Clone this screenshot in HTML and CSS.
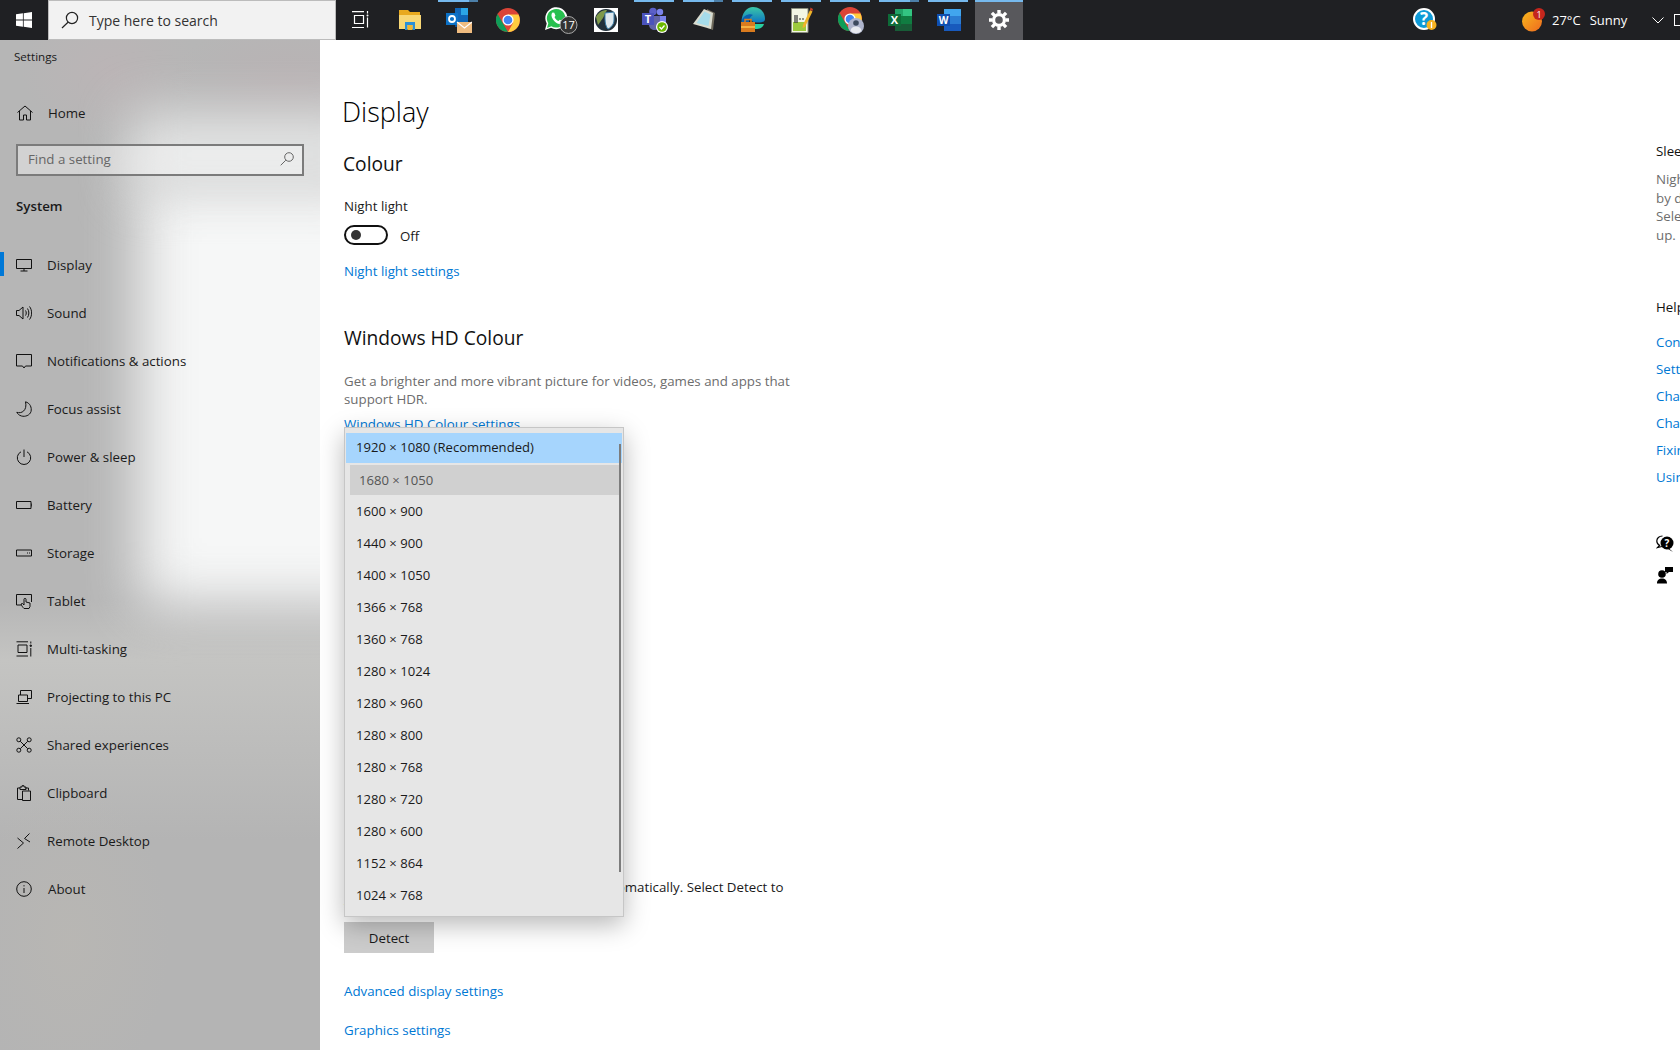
FILE: index.html
```html
<!DOCTYPE html>
<html lang="en">
<head>
    <meta charset="UTF-8">
    <meta name="viewport" content="width=device-width, initial-scale=1.0">
    <title>Settings - Display</title>
    <link rel="stylesheet" href="styles.css">
</head>
<body>
    <!-- taskbar -->
    <div class="taskbar">
        <div class="start">
            <svg width="16" height="16" viewBox="0 0 16 16"><path fill="#fff" d="M0 2.3 6.9 1.3V7.6H0ZM7.7 1.2 16 0V7.6H7.7ZM0 8.4H6.9V14.7L0 13.7ZM7.7 8.4H16V16L7.7 14.8Z"/></svg>
        </div>
        <div class="search-box">
            <svg width="18" height="18" viewBox="0 0 18 18" fill="none" stroke="#222" stroke-width="1.2"><circle cx="11" cy="7" r="5.6"/><path d="M7 11.2 1 17"/></svg>
            <span>Type here to search</span>
        </div>
        <div class="tile">
            <svg width="18" height="18" viewBox="0 0 18 18" fill="none" stroke="#fff" stroke-width="1.2"><path d="M0 .6H12M2.500 4.500H11.500V12.500H2.500ZM0 16.500H12M15.500 0V2.500M15.500 6.500V16.500"/><circle cx="15.500" cy="4.500" r="1" fill="#fff" stroke="none"/></svg>
        </div>
        <div class="tile">
            <svg width="24" height="22" viewBox="0 0 24 22"><path fill="#e8a91f" d="M1 1H10L12 3H22V7H1Z"/><path fill="#f8d775" d="M1 6H23V20H1Z"/><path fill="#2b8fd8" d="M7 13H17V21H14.500V16H9.500V21H7Z"/><path fill="#f2b632" d="M9.500 16H14.500V21H9.500Z"/></svg>
        </div>
        <div class="tile open stacked">
            <svg width="26" height="26" viewBox="0 0 26 26"><path fill="#1066b8" d="M9 1H22V15H9Z"/><path fill="#2ba5e6" d="M15 1H22V8H15Z"/><path fill="#0f4f96" d="M9 15H22V20H9Z"/><path fill="#0c71c6" d="M0 6H12V18H0Z"/><circle cx="6" cy="12" r="3" fill="none" stroke="#fff" stroke-width="1.800"/><path fill="#f0bc80" d="M11 15H26V26H11Z"/><path fill="none" stroke="#fff" stroke-width="1.200" d="M11 15 18.500 21 26 15"/></svg>
        </div>
        <div class="tile">
            <svg width="24" height="24" viewBox="0 0 24 24"><circle cx="12" cy="12" r="12" fill="#db4437"/><path fill="#0f9d58" d="M12 24A12 12 0 0 1 1.600 6L7 15.500 12 24Z"/><path fill="#ffcd40" d="M12 6.500H22.500A12 12 0 0 1 12 24L17 15Z"/><circle cx="12" cy="12" r="5.600" fill="#fff"/><circle cx="12" cy="12" r="4.300" fill="#4285f4"/></svg>
        </div>
        <div class="tile whatsapp">
            <svg width="34" height="28" viewBox="0 0 34 28"><path fill="#fff" d="M1 24 2.700 17.500A11 11 0 1 1 7 21.800Z"/><path fill="#28c04f" d="M3 22 4.300 17.300A9.300 9.300 0 1 1 7.400 20.300Z"/><path fill="#fff" d="M8.500 6.500C7 8 7 10.500 9 13.500S14 18.500 16.500 18C18 17.700 19 16 18.500 15.200L15.800 13.800 14.500 15C13 14.500 11 12.500 10.500 11L11.500 9.700 10.300 6.800Z"/><circle cx="24.500" cy="19" r="8.500" fill="#333" stroke="#aaa" stroke-width="1"/><text x="24.500" y="23" class="icon-text" font-size="11" fill="#fff" text-anchor="middle">17</text></svg>
        </div>
        <div class="tile">
            <svg width="24" height="24" viewBox="0 0 24 24"><path fill="#fff" d="M0 0H24V24H0Z"/><circle cx="12" cy="12" r="11" fill="#22303a"/><path fill="#7f9a4a" d="M2 9C5 3 10 2 13 2L9 10 4 17Z"/><path fill="#dfe9ee" stroke="#3a7ea8" stroke-width="1" d="M11 5 20 4V12C20 17 16 20 14 21 12 19 11 15 11 11Z"/></svg>
        </div>
        <div class="tile open">
            <svg width="26" height="26" viewBox="0 0 26 26"><circle cx="18" cy="5" r="3.200" fill="#7b83eb"/><circle cx="11" cy="4.500" r="3.800" fill="#5b5fc7"/><path fill="#7b83eb" d="M15 9H24V17C24 20 21 21 19 21H15Z"/><path fill="#6264a7" d="M7 9H18V19C18 22 15 23 12.500 23S7 21 7 18Z"/><path fill="#4b53bc" d="M0 6H12V18H0Z"/><text x="6" y="16" class="icon-text" font-size="11" font-weight="700" fill="#fff" text-anchor="middle">T</text><circle cx="20" cy="20" r="6" fill="#fff"/><circle cx="20" cy="20" r="4.800" fill="#6bb700"/><path fill="none" stroke="#fff" stroke-width="1.300" d="M17.500 20 19.500 22 22.500 18.500"/></svg>
        </div>
        <div class="tile open stacked">
            <svg width="24" height="24" viewBox="0 0 24 24"><path fill="#6f6a5c" d="M15 1 23 5 21 22 15 20Z"/><path fill="#d9dcd0" d="M12 1 21 5 19 21 1 16Z"/><path fill="#a6dcea" d="M12.500 3.500 18.500 6.500 16.500 18 4.500 15Z"/></svg>
        </div>
        <div class="tile open">
            <svg width="24" height="26" viewBox="0 0 24 26"><defs><linearGradient id="edgeBlue" x1="0" y1="0" x2="0" y2="1"><stop offset="0" stop-color="#3bc7a8"/><stop offset="1" stop-color="#0a70c4"/></linearGradient></defs><path fill="url(#edgeBlue)" d="M12 0C20 0 24 6 24 12 24 15 21 15.500 17 15.500 12 15.500 10 14 10 12 6 12 1 14 .5 17 0 6 6 0 12 0Z"/><path fill="#0a5fae" d="M1 13C3 8 9 6 12 8 10 9 8 11 8 15H1Z"/><path fill="#2ad0a0" d="M16 22C20 22 22.500 19 23 17H14V22Z"/><path fill="#d97b1e" d="M0 15H14V25H0Z"/><path fill="#f5b042" d="M0 19H14V21H0Z"/><path fill="none" stroke="#d97b1e" stroke-width="1.500" d="M4 15V12.500H10V15"/></svg>
        </div>
        <div class="tile open">
            <svg width="22" height="26" viewBox="0 0 22 26"><path fill="#f3f6e4" stroke="#8b8f7e" d="M.5 1.500H17V25.500H.5Z"/><path fill="#9dcb3c" d="M2 8H15V24H2Z"/><path fill="#f3f6e4" d="M2 8H15V15H2Z"/><path stroke="#333" stroke-width="1.200" d="M4 8V16M6 8V16M8 12H10M11 12H13"/><path fill="#f0b429" d="M19 3 21.500 4.500 14 20 11.500 21 12 18Z"/><path fill="#c9412c" d="M19.500 .5 22 2 21.400 4 19 3Z"/></svg>
        </div>
        <div class="tile open">
            <svg width="26" height="27" viewBox="0 0 26 27"><circle cx="12" cy="12" r="12" fill="#db4437"/><path fill="#0f9d58" d="M12 24A12 12 0 0 1 1.600 6L7 15.500 12 24Z"/><path fill="#ffcd40" d="M12 6.500H22.500A12 12 0 0 1 12 24L17 15Z"/><circle cx="12" cy="12" r="5.600" fill="#fff"/><circle cx="12" cy="12" r="4.300" fill="#4285f4"/><circle cx="18" cy="19" r="8" fill="#aeb4cc"/><circle cx="18" cy="16" r="2.800" fill="#3d4a5e"/><path fill="#e8eaf0" d="M12.500 24C13 20.500 15.500 19.500 18 19.500S23 20.500 23.500 24A8 8 0 0 1 12.500 24Z"/></svg>
        </div>
        <div class="tile open stacked">
            <svg width="24" height="24" viewBox="0 0 24 24"><path fill="#21a366" d="M7 1H24V8H7Z"/><path fill="#33c481" d="M15 1H24V8H15Z"/><path fill="#107c41" d="M7 8H24V16H7Z"/><path fill="#185c37" d="M7 16H24V23H7Z"/><path fill="#0e6b38" d="M0 6H13V18H0Z"/><text x="6.500" y="16" class="icon-text" font-size="11" font-weight="700" fill="#fff" text-anchor="middle">X</text></svg>
        </div>
        <div class="tile open">
            <svg width="24" height="24" viewBox="0 0 24 24"><path fill="#41a5ee" d="M7 1H24V8H7Z"/><path fill="#2b7cd3" d="M7 8H24V16H7Z"/><path fill="#185abd" d="M7 16H24V23H7Z"/><path fill="#0f4fb0" d="M0 6H13V18H0Z"/><text x="6.500" y="16" class="icon-text" font-size="10" font-weight="700" fill="#fff" text-anchor="middle">W</text></svg>
        </div>
        <div class="tile open active">
            <svg width="20" height="20" viewBox="0 0 20 20" fill="none" stroke="#fff"><circle cx="10" cy="10" r="5.400" stroke-width="3.200"/><path stroke-width="3.400" d="M10 0V3.500M10 16.500V20M0 10H3.500M16.500 10H20M2.900 2.900 5.400 5.400M14.600 14.600 17.100 17.100M17.100 2.900 14.600 5.400M5.400 14.600 2.900 17.100"/></svg>
        </div>

        <div class="tray">
            <svg class="help-icon" width="24" height="24" viewBox="0 0 24 24"><circle cx="11" cy="11" r="10" fill="#0e9ad7" stroke="#fff" stroke-width="2"/><text x="11" y="17" class="icon-text" font-size="17" font-weight="700" fill="#fff" text-anchor="middle">?</text><circle cx="18.500" cy="17" r="5" fill="#f5b120"/><path stroke="#fff" stroke-width="1.300" d="M18.500 14V20"/></svg>
            <svg class="weather-icon" width="24" height="24" viewBox="0 0 24 24"><defs><linearGradient id="sun" x1="0" y1="0" x2="1" y2="1"><stop offset="0" stop-color="#f9b81c"/><stop offset="1" stop-color="#ee6a1f"/></linearGradient></defs><circle cx="10" cy="13.500" r="10" fill="url(#sun)"/><circle cx="17" cy="6" r="6" fill="#c4261d"/><text x="17" y="9.500" class="icon-text" font-size="9" fill="#fff" text-anchor="middle">1</text></svg>
            <span class="temp">27°C</span>
            <span class="sky">Sunny</span>
            <svg class="chevron" width="12" height="7" viewBox="0 0 12 7" fill="none" stroke="#fff" stroke-width="1"><path d="M.5 .5 6 6 11.500 .5"/></svg>
            <span class="tray-box"></span>
        </div>
    </div>

    <div class="window">
        <!-- left nav -->
        <div class="sidebar">
            <div class="app-title">Settings</div>
            <div class="home-row">
                <svg width="16" height="16" viewBox="0 0 16 16" fill="none" stroke="#111" stroke-width="1"><path d="M.5 7.500 8 1 15.500 7.500M2.500 6V15H6.500V10H9.500V15H13.500V6"/></svg>
                <span>Home</span>
            </div>
            <div class="find-box">
                <span>Find a setting</span>
                <svg width="14" height="14" viewBox="0 0 14 14" fill="none" stroke="#666" stroke-width="1"><circle cx="9" cy="5" r="4.300"/><path d="M5.800 8.200 .7 13.300"/></svg>
            </div>
            <div class="group-title">System</div>
            <ul class="nav">
                <li class="selected">
                    <svg viewBox="0 0 16 16"><path d="M.5 2.500H15.500V11.500H.5ZM8 11.500V14M4.500 14H11.500"/></svg>
                    <span>Display</span>
                </li>
                <li>
                    <svg viewBox="0 0 16 16"><path d="M.5 5.500H3L7 2V14L3 10.500H.5ZM9.500 5.500C10.500 7 10.500 9 9.500 10.500M11.500 3.500C13.300 6 13.300 10 11.500 12.500M13.500 1.500C16.300 5 16.300 11 13.500 14.500"/></svg>
                    <span>Sound</span>
                </li>
                <li>
                    <svg viewBox="0 0 16 16"><path d="M.5 1.500H15.500V13H9.500L8 15 6.500 13H.5Z"/></svg>
                    <span>Notifications &amp; actions</span>
                </li>
                <li>
                    <svg viewBox="0 0 16 16"><path d="M9.500 .8C14 2 16 6.500 15 10.500 13.800 14.500 9 16 5.500 15 3 14.300 1.500 12.800 .8 11.300 5.500 13 11.500 9.500 9.500 .8Z"/></svg>
                    <span>Focus assist</span>
                </li>
                <li>
                    <svg viewBox="0 0 16 16"><path d="M8 .5V8M5 2.800A6.700 6.700 0 1 0 11 2.800"/></svg>
                    <span>Power &amp; sleep</span>
                </li>
                <li>
                    <svg viewBox="0 0 16 16"><path d="M.5 4.500H15V11.500H.5ZM15.800 6.500V9.500"/></svg>
                    <span>Battery</span>
                </li>
                <li>
                    <svg viewBox="0 0 16 16"><path d="M.5 5H15.500V11H.5ZM11 8H12M13 8H14"/></svg>
                    <span>Storage</span>
                </li>
                <li>
                    <svg viewBox="0 0 16 16"><path d="M5 12H.5V1.500H15.500V9M8 15.500C6.500 14 5.500 12.500 5 11L6.500 10.500 8 12V6.300C8 5 10 5 10 6.300V9L14 10V13.500L13 15.500Z"/></svg>
                    <span>Tablet</span>
                </li>
                <li>
                    <svg viewBox="0 0 16 16"><path d="M.5 .8H12M2 4H11V11.500H2ZM.5 15H12M14.800 .5V2.500M14.800 7V15.500"/><circle cx="14.800" cy="4.700" r=".8" fill="#111"/></svg>
                    <span>Multi-tasking</span>
                </li>
                <li>
                    <svg viewBox="0 0 16 16"><path d="M4.500 6V1.500H15.500V9.500H12M2.500 6H11.500V12.500H2.500ZM.5 14.500H13"/></svg>
                    <span>Projecting to this PC</span>
                </li>
                <li>
                    <svg viewBox="0 0 16 16"><circle cx="2.800" cy="2.800" r="2"/><circle cx="13.200" cy="2.800" r="2"/><circle cx="2.800" cy="13.200" r="2"/><circle cx="13.200" cy="13.200" r="2"/><path d="M4.300 4.300 11.700 11.700M11.700 4.300 4.300 11.700"/></svg>
                    <span>Shared experiences</span>
                </li>
                <li>
                    <svg viewBox="0 0 16 16"><path d="M6 14.500H1.500V3H4M9 3H12.500V5.500M4 4.500V2H6V.7H8V2H10V4.500ZM6.500 6H14.500V15.500H6.500Z"/></svg>
                    <span>Clipboard</span>
                </li>
                <li>
                    <svg viewBox="0 0 16 16"><path d="M1.500 5 7.500 10 1.500 15.500M13.500 .5 8.500 5.500 14 9"/></svg>
                    <span>Remote Desktop</span>
                </li>
                <li>
                    <svg viewBox="0 0 16 16"><circle cx="8" cy="8" r="7.300"/><path d="M8 7V12M8 4.200V5.400"/></svg>
                    <span class="about-label">About</span>
                </li>
            </ul>
        </div>

        <!-- main page -->
        <div class="main">
            <div class="content">
                <h1>Display</h1>
                <h2>Colour</h2>
                <div class="field-label">Night light</div>
                <div class="toggle-row">
                    <span class="toggle"><span class="knob"></span></span>
                    <span class="toggle-state">Off</span>
                </div>
                <a class="link night-link">Night light settings</a>
                <h2 class="hd-title">Windows HD Colour</h2>
                <p class="desc">Get a brighter and more vibrant picture for videos, games and apps that support HDR.</p>
                <a class="link hd-link">Windows HD Colour settings</a>
                <p class="older">Older displays might not always connect automatically. Select Detect to try to connect to them.</p>
                <button class="detect">Detect</button>
                <a class="link advanced-link">Advanced display settings</a>
                <a class="link graphics-link">Graphics settings</a>
            </div>
            <div class="aside">
                <div class="aside-title">Sleep better</div>
                <p class="aside-text">Night light can help you get to sleep<br>by displaying warmer colours at night.<br>Select Night light settings to set things<br>up.</p>
                <div class="aside-title help-title">Help from the web</div>
                <a class="link aside-link">Connecting to a wireless display</a>
                <a class="link aside-link">Setting up multiple monitors</a>
                <a class="link aside-link">Changing screen brightness</a>
                <a class="link aside-link">Changing display colours</a>
                <a class="link aside-link">Fixing blurry apps</a>
                <a class="link aside-link">Using Night light</a>
                <div class="aside-action first-action">
                    <svg width="18" height="18" viewBox="0 0 18 18"><path fill="none" stroke="#000" stroke-width="1.200" d="M6.500 1C3 1 .8 3.300 .8 6 .8 8 2 9.500 3.500 10.300L1.500 12.500 6 11.500"/><circle cx="11" cy="8" r="6.500" fill="#000"/><path d="M13 13.500 17 17 12 14Z" fill="#000"/><text x="11" y="12" class="icon-text" font-size="10" font-weight="700" fill="#fff" text-anchor="middle">?</text></svg>
                    <span>Get help</span>
                </div>
                <div class="aside-action">
                    <svg width="18" height="18" viewBox="0 0 18 18"><circle cx="6" cy="8" r="3.800" fill="#000"/><path fill="#000" d="M1 17.500C1 14 3 12.500 6 12.500S11 14 11 17.500ZM9 1H17V6H13L10.500 8V6H9Z"/></svg>
                    <span>Give feedback</span>
                </div>
            </div>

            <!-- open resolution list -->
            <ul class="dropdown">
                <li class="recommended"><span>1920 × 1080 (Recommended)</span></li>
                <li class="current"><span>1680 × 1050</span></li>
                <li><span>1600 × 900</span></li>
                <li><span>1440 × 900</span></li>
                <li><span>1400 × 1050</span></li>
                <li><span>1366 × 768</span></li>
                <li><span>1360 × 768</span></li>
                <li><span>1280 × 1024</span></li>
                <li><span>1280 × 960</span></li>
                <li><span>1280 × 800</span></li>
                <li><span>1280 × 768</span></li>
                <li><span>1280 × 720</span></li>
                <li><span>1280 × 600</span></li>
                <li><span>1152 × 864</span></li>
                <li><span>1024 × 768</span></li>
            </ul>
            <div class="scroll-thumb"></div>
        </div>
    </div>
</body>
</html>
```

FILE: styles.css
```css
* {
    box-sizing: border-box;
}
html, body {
    height: 100%;
}
body {
    margin: 0;
    width: 1680px;
    height: 1050px;
    overflow: hidden;
    font-family: "Open Sans", "Noto Sans", Arial, sans-serif;
    font-size: 13.3px;
    color: #1a1a1a;
    background: #fff;
}
.icon-text {
    font-family: "Open Sans", Arial, sans-serif;
}

/* taskbar */
.taskbar {
    display: flex;
    height: 40px;
    background: #1f2023;
    color: #fff;
}
.start {
    flex: none;
    width: 48px;
    display: flex;
    align-items: center;
    justify-content: center;
}
.search-box {
    flex: none;
    width: 288px;
    display: flex;
    align-items: center;
    gap: 10px;
    padding-left: 12px;
    background: #f2f2f2;
    border: 1px solid #bcbcbc;
    color: #333;
    font-size: 14px;
}
.tile {
    position: relative;
    flex: none;
    width: 49px;
    display: flex;
    align-items: center;
    justify-content: center;
}
.tile.whatsapp {
    padding-left: 9px;
}
.tile.whatsapp svg {
    flex: none;
}
.tile.open::before {
    content: "";
    position: absolute;
    top: 0;
    left: 4px;
    right: 5px;
    height: 2px;
    background: #76b9ed;
}
.tile.stacked::after {
    content: "";
    position: absolute;
    top: 0;
    right: 5px;
    width: 9px;
    height: 2px;
    background: #4c7fa8;
}
.tile.active {
    background: #58585c;
    margin-left: 2px;
    width: 48px;
}
.tile.active::before {
    left: 0;
    right: 0;
}
.tray {
    flex: none;
    display: flex;
    align-items: center;
    font-size: 13px;
}
.help-icon {
    margin-left: 390px;
}
.weather-icon {
    margin-left: 85px;
}
.temp {
    margin-left: 6px;
}
.sky {
    margin-left: 9px;
}
.chevron {
    margin-left: 25px;
}
.tray-box {
    width: 10px;
    height: 12px;
    margin-left: 10px;
    border: 1px solid #fff;
    flex: none;
}

/* window */
.window {
    display: flex;
    height: 1010px;
}
.sidebar {
    position: relative;
    width: 320px;
    flex: none;
    overflow: hidden;
    background:
        radial-gradient(ellipse 90px 70px at 110px 30px, rgba(196,178,182,.35), rgba(196,178,182,0)),
        radial-gradient(ellipse 120px 60px at 290px 40px, rgba(190,172,176,.35), rgba(190,172,176,0)),
        radial-gradient(ellipse 100px 160px at 70px 900px, rgba(190,186,178,.4), rgba(190,186,178,0)),
        linear-gradient(to bottom, #b6b6b6 0, #b6b6b6 560px, #c4c4c2 620px, #b4b4b4 800px);
}
.sidebar::before {
    content: "";
    position: absolute;
    left: 140px;
    top: 135px;
    width: 260px;
    height: 430px;
    background: #f6f7f7;
    filter: blur(28px);
}
.sidebar::after {
    content: "";
    position: absolute;
    left: 130px;
    top: 72px;
    width: 240px;
    height: 80px;
    background: #e2e3e3;
    filter: blur(26px);
}
.sidebar > * {
    position: relative;
    z-index: 1;
}
.app-title {
    padding: 8px 0 0 14px;
    font-size: 11.6px;
    line-height: 18px;
}
.home-row {
    display: flex;
    align-items: center;
    height: 24px;
    margin-top: 35px;
    padding-left: 17px;
}
.home-row span {
    margin-left: 15px;
}
.find-box {
    display: flex;
    align-items: center;
    justify-content: space-between;
    width: 288px;
    height: 32px;
    margin: 19px 0 0 16px;
    padding: 0 8px 2px 10px;
    border: 2px solid #7b7b7b;
    background: rgba(255,255,255,.38);
    color: #666;
}
.group-title {
    margin: 20px 0 0 16px;
    line-height: 20px;
    font-weight: 600;
}
.nav {
    list-style: none;
    margin: 25px 0 0;
    padding: 0;
}
.nav li {
    position: relative;
    display: flex;
    align-items: center;
    height: 48px;
    padding-left: 16px;
}
.nav svg {
    width: 16px;
    height: 16px;
    flex: none;
    fill: none;
    stroke: #111;
    stroke-width: 1;
}
.nav span {
    margin-left: 15px;
}
.nav .about-label {
    margin-left: 16px;
}
.nav li.selected::before {
    content: "";
    position: absolute;
    left: 0;
    top: 11px;
    width: 4px;
    height: 24px;
    background: #0078d7;
}

/* main page */
.main {
    position: relative;
    flex: 1;
    display: flex;
    padding-left: 24px;
    overflow: hidden;
    background: #fff;
}
.content {
    flex: 0 0 1312px;
    padding-top: 52px;
}
h1 {
    margin: 0 0 0 -2px;
    font-size: 27px;
    line-height: 40px;
    font-weight: 300;
    color: #000;
}
h2 {
    margin: 18px 0 0 -1px;
    font-size: 19.2px;
    line-height: 28px;
    font-weight: 400;
    color: #111;
}
.field-label {
    margin-top: 18px;
    line-height: 20px;
}
.toggle-row {
    display: flex;
    align-items: center;
    gap: 12px;
    height: 20px;
    margin-top: 9px;
}
.toggle {
    display: flex;
    align-items: center;
    width: 44px;
    height: 20px;
    padding-left: 5px;
    border: 2px solid #111;
    border-radius: 10px;
}
.knob {
    width: 10px;
    height: 10px;
    border-radius: 50%;
    background: #333;
}
.toggle-state {
    padding-top: 2px;
}
.link {
    display: block;
    line-height: 20px;
    color: #0078d4;
}
.night-link {
    margin-top: 16px;
}
.hd-title {
    margin: 43px 0 0;
}
.desc {
    width: 450px;
    margin: 20px 0 0;
    line-height: 18px;
    color: #6d6d6d;
}
.hd-link {
    margin-top: 6px;
}
.older {
    width: 450px;
    margin: 444px 0 0;
    line-height: 18.5px;
}
.detect {
    display: block;
    width: 90px;
    height: 31px;
    margin-top: 7px;
    padding: 0;
    border: none;
    background: #cccccc;
    font: inherit;
    color: #1a1a1a;
}
.advanced-link {
    margin-top: 28px;
}
.graphics-link {
    margin-top: 19px;
}

/* right column, runs off the screen */
.aside {
    flex: 0 0 320px;
    padding-top: 101px;
}
.aside-title {
    line-height: 20px;
    color: #111;
}
.aside-text {
    margin: 9px 0 0;
    line-height: 18.5px;
    color: #6d6d6d;
}
.help-title {
    margin-top: 53px;
}
.aside-link {
    margin-top: 7px;
}
.help-title + .aside-link {
    margin-top: 15px;
}
.aside-action {
    display: flex;
    align-items: center;
    gap: 12px;
    height: 20px;
    margin-top: 11px;
}
.aside-action.first-action {
    margin-top: 47px;
}

/* resolution list */
.dropdown {
    position: absolute;
    left: 24px;
    top: 387px;
    width: 280px;
    height: 490px;
    margin: 0;
    padding: 5px 1px 0;
    list-style: none;
    background: #e6e6e6;
    border: 1px solid #c6c6c6;
    box-shadow: 0 8px 24px rgba(0,0,0,.28);
    font-size: 13.1px;
}
.dropdown li {
    display: flex;
    align-items: center;
    height: 32px;
    padding: 0 0 4px 10px;
    color: #1a1a1a;
}
.dropdown .recommended {
    height: 30px;
    margin-bottom: 2px;
    padding-bottom: 2px;
    background: #a6d5fd;
}
.dropdown .current {
    height: 30px;
    margin: 0 1px 2px 4px;
    padding: 0 0 1px 9px;
    background: #d0d0d0;
    color: #555;
}
.scroll-thumb {
    position: absolute;
    left: 299px;
    top: 404px;
    width: 2px;
    height: 428px;
    background: #7c7c7c;
}
```
